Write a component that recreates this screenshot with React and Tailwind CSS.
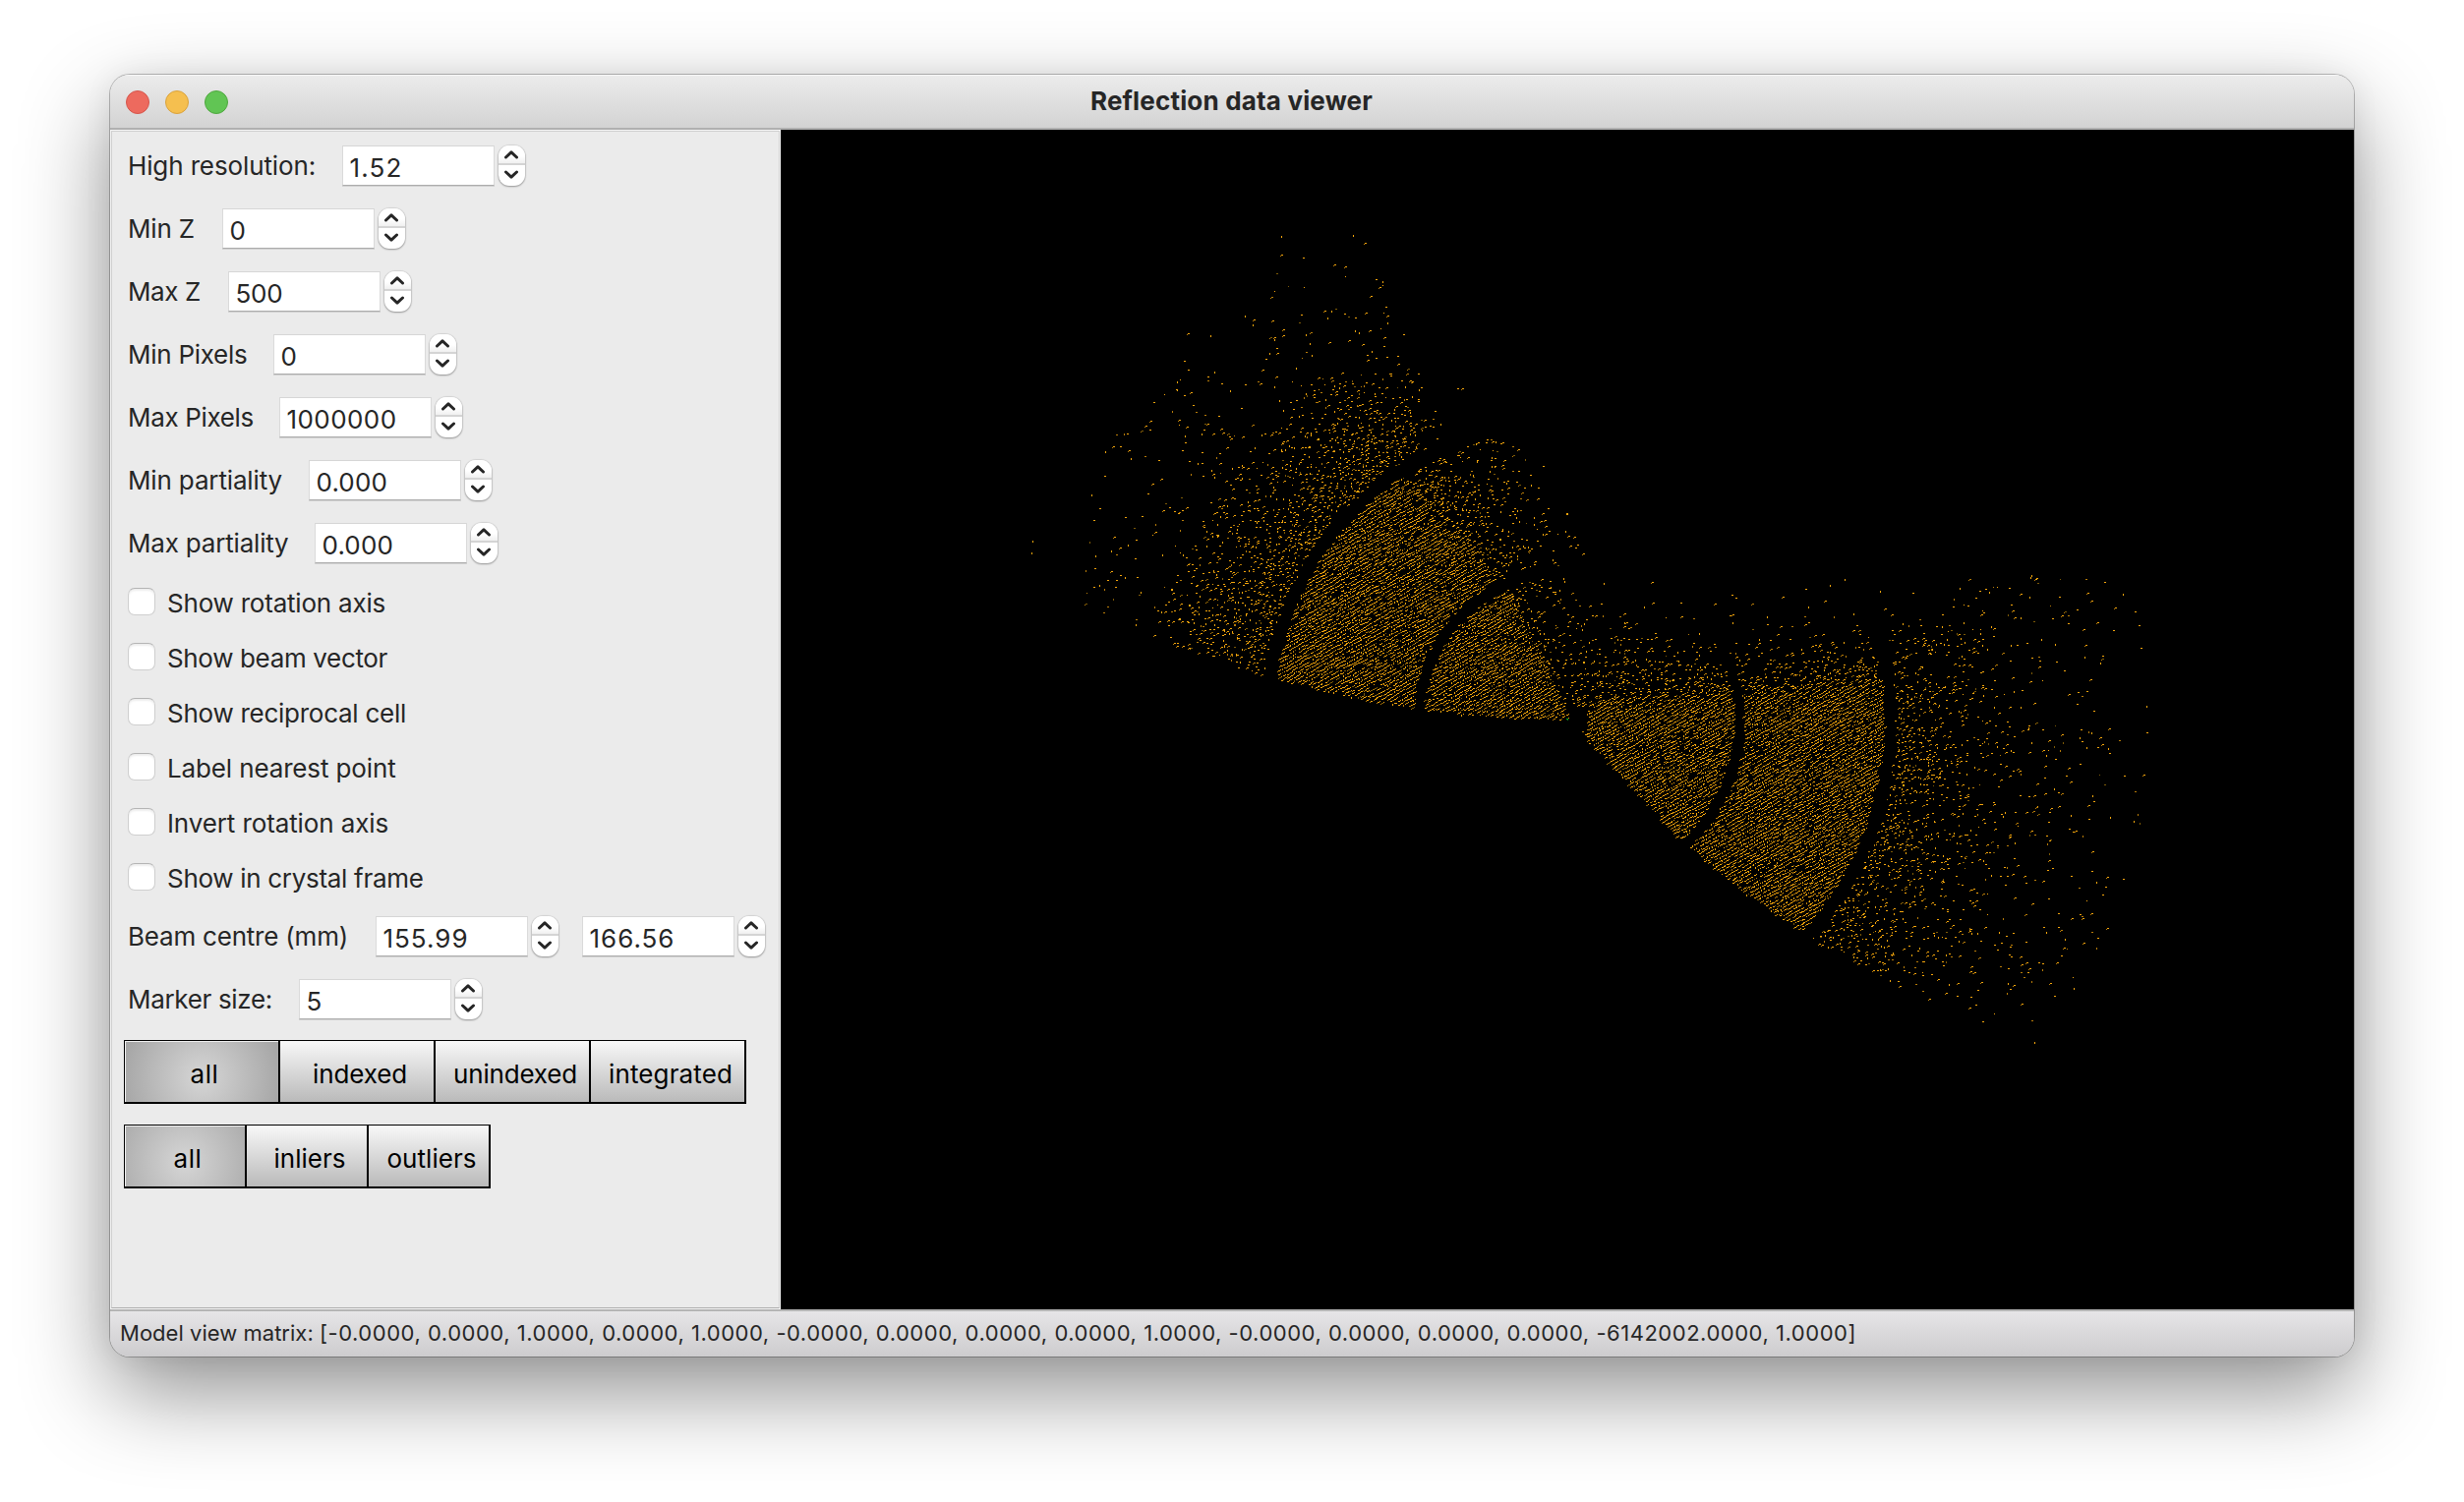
import { useLayoutEffect, useMemo, useRef } from "react";

// Text whose tracking is adjusted so that its advance width equals `w`.
function Fit({ w, className = "", children }) {
  const ref = useRef(null);
  useLayoutEffect(() => {
    const el = ref.current;
    el.style.letterSpacing = "0px";
    const natural = el.getBoundingClientRect().width;
    el.style.letterSpacing = (w - natural) / el.textContent.length + "px";
  }, [w, children]);
  return (
    <span ref={ref} className={"inline-block shrink-0 whitespace-pre " + className}>
      {children}
    </span>
  );
}

function Stepper() {
  return (
    <div className="ml-1 flex h-[41px] w-[27px] shrink-0 flex-col overflow-hidden rounded-[11px] bg-white shadow-[0_0_1px_1px_rgba(0,0,0,0.09),0_1px_2px_rgba(0,0,0,0.3)]">
      <div className="flex h-5 items-center justify-center border-b-2 border-[#d4d4d4] bg-linear-to-b from-white from-60% to-[#f0f0f0]">
        <svg width="16" height="10" viewBox="0 0 16 10" fill="none" stroke="#262626" strokeWidth="3" strokeLinecap="round" strokeLinejoin="round">
          <path d="M2.5 8 L8 2.8 L13.5 8" />
        </svg>
      </div>
      <div className="flex h-[21px] items-center justify-center">
        <svg width="16" height="10" viewBox="0 0 16 10" fill="none" stroke="#262626" strokeWidth="3" strokeLinecap="round" strokeLinejoin="round">
          <path d="M2.5 2 L8 7.2 L13.5 2" />
        </svg>
      </div>
    </div>
  );
}

function Spin({ value, w }) {
  return (
    <div className="flex items-center">
      <div className="flex h-[41px] w-[155px] items-center border border-b-[#acacac] border-x-[#dadada] border-t-[#d6d6d6] bg-white pl-[7px] pt-[5px] leading-none shadow-[0_1px_0_#d2d2d2]">
        <Fit w={w}>{value}</Fit>
      </div>
      <Stepper />
    </div>
  );
}

function Check({ label, w }) {
  return (
    <div className="flex h-14 items-center pl-4">
      <div className="h-7 w-7 rounded-[7px] border border-[#cfcfcf] border-t-[#b4b4b4] bg-white shadow-[inset_0_2px_2px_rgba(0,0,0,0.07)]" />
      <Fit w={w} className="ml-3 pt-[3px] leading-none">{label}</Fit>
    </div>
  );
}

const fields = [
  ["High resolution:", 191, "w-[217.5px]", "1.52", 54],
  ["Min Z", 68, "w-[95.5px]", "0", 17],
  ["Max Z", 74, "w-[101.5px]", "500", 48],
  ["Min Pixels", 121.5, "w-[147.5px]", "0", 17],
  ["Max Pixels", 128, "w-[153.5px]", "1000000", 112],
  ["Min partiality", 157, "w-[183.5px]", "0.000", 72.5],
  ["Max partiality", 163.5, "w-[189.5px]", "0.000", 72.5],
];

const checks = [
  ["Show rotation axis", 222],
  ["Show beam vector", 224],
  ["Show reciprocal cell", 243],
  ["Label nearest point", 232.5],
  ["Invert rotation axis", 225],
  ["Show in crystal frame", 260.5],
];

const groups = [
  { box: "w-[633px]", cell: "w-[158px]", items: [["all", 29], ["indexed", 96], ["unindexed", 126], ["integrated", 126]] },
  { box: "w-[373px]", cell: "w-[124px]", items: [["all", 29], ["inliers", 73], ["outliers", 91]] },
];

function Segments({ box, cell, items }) {
  return (
    <div className={box + " flex h-[65px] border-b-2 border-l border-t border-black text-black"}>
      {items.map(([t, w], i) => (
        <div
          key={t}
          className={
            cell +
            " flex shrink-0 items-center justify-center border-r-2 border-black pl-1.5 pt-[5px] leading-none " +
            (i === 0
              ? "bg-[radial-gradient(circle_at_50%_60%,#d6d6d6_0,#a6a6a6_82px)] shadow-[inset_1px_1px_0_#f0f0f0]"
              : "bg-linear-to-b from-[#f8f8f8] to-[#bababa]")
          }
        >
          <Fit w={w}>{t}</Fit>
        </div>
      ))}
    </div>
  );
}

// Seeded generator, so that the cloud is the same on each load.
function rng(seed) {
  let s = seed;
  return () => {
    s = (s + 0x6d2b79f5) | 0;
    let t = Math.imul(s ^ (s >>> 15), 1 | s);
    t = (t + Math.imul(t ^ (t >>> 7), 61 | t)) ^ t;
    return ((t ^ (t >>> 14)) >>> 0) / 4294967296;
  };
}

const OX = 800;
const OY = 600;
const DEG = 180 / Math.PI;
const clamp = (v) => Math.max(0, Math.min(1, v));
const mix = (a, b, t) => a + (b - a) * clamp(t);

// Radial fall-off shared by both lobes, with detector gaps at g1 and g2.
function radial(r, g1, g2, mid, end) {
  if (Math.abs(r - g1) < 5.5 || Math.abs(r - g2) < 6.5) return 0;
  if (r < g2) return 1;
  if (r < mid) return mix(0.78, 0.16, (r - g2) / (mid - g2));
  if (r < end) return mix(0.085, 0.025, (r - mid) / (end - mid));
  return 0;
}

function leftLobe(dx, dy) {
  const r = Math.hypot(dx, dy);
  const a = Math.atan2(-dy, -dx) * DEG;
  const end = a > 40 ? 556 : a > 20 ? 545 : 525;
  if (a < r * 0.0265 || r > end) return 0;
  const amax = Math.max(67.5, 121 - r * 0.135);
  if (a > amax) return 0;
  const p = radial(r, 152, 306, 424, 560);
  if (r > 424) return a > 60 ? p * 0.6 : p;
  if (r > 306) {
    return a < 60 ? p : Math.min(p, mix(p * 0.8, 0.03, (a - 60) / 8));
  }
  const top = 51 + (306 - r) * 0.05;
  if (a < top) return p;
  if (a < top + 13) return Math.min(p, mix(1, 0.42, (a - top) / 13));
  return Math.min(p, mix(0.36, 0.03, (a - top - 13) / (amax - top - 15)));
}

function rightLobe(dx, dy) {
  const r = Math.hypot(dx, dy);
  const b = Math.atan2(dy, dx) * DEG;
  if (dx < 3 || r > 592 || (r < 20 && dy > -15)) return 0;
  if (b > 47 - Math.max(0, r - 170) * 0.031) return 0;
  const outer = dy > 0 ? 465 : 445;
  const p = radial(r, 174, 328, outer, 592) * (r > 328 && r < outer ? mix(1, 0.65, (r - 328) / 60) : 1);
  const edge = -30 - dx * 0.07;
  if (dy > edge + 22) return p;
  if (r > outer) return dy < -145 ? 0 : p * 0.7;
  if (dy > edge - 10) return p * mix(0.42, 1, (dy - edge + 10) / 32);
  if (dy < -145) return 0;
  const d = edge - 10 - dy;
  const fade = d < 40 ? mix(0.34, 0.06, d / 40) : mix(0.045, 0.008, (d - 40) / 60);
  if (dx < 110) {
    const row = ((dy % 12) + 12) % 12 < 3.8 ? 2.1 : 0.4;
    return Math.min(p, mix(0.5, 0.015, (dx * 0.3 - dy - 40) / 85) * row);
  }
  return Math.min(p, fade);
}

function buildCloud() {
  const rand = rng(20211);
  const bright = [];
  const mid = [];
  const dim = [];
  const slope = 0.56;
  const put = (list, x, y, w, h) => list.push("M" + x + " " + y + "h" + w + "v" + h + "h-" + w + "z");
  for (let c = 0; c < 1700; c += 3.8) {
    for (let x = 240 + rand() * 3; x < 1400; x += 3.3) {
      const y = c - slope * (x - 240);
      if (y < 80 || y > 940) continue;
      const dx = x - OX;
      const dy = y - OY;
      const p = Math.max(leftLobe(dx, dy), rightLobe(dx, dy));
      if (rand() > p * 0.93) continue;
      const loose = p < 0.8 ? 3.4 : 1.2;
      const px = Math.round(x + (rand() - 0.5) * loose);
      const py = Math.round(y + (rand() - 0.5) * loose);
      const k = rand();
      const list = k < 0.78 ? bright : k < 0.93 ? mid : dim;
      const s = rand();
      if (s < 0.42) put(list, px, py, 2, 1);
      else if (s < 0.6) put(list, px, py, 1, 2);
      else if (s < 0.66) put(list, px, py, 1, 1);
      else {
        put(list, px, py, 2, 1);
        put(mid, px - 1, py + 1, 1, 1);
      }
      if (p > 0.8 && rand() < 0.85) put(rand() < 0.7 ? bright : dim, px + 2, py - 1, 1, 1);
    }
  }
  // Isolated reflections far from the main sweep.
  [[255, 430], [256, 418], [509, 108], [582, 107], [1272, 453], [1389, 586], [1275, 928], [1271, 455]].forEach(
    ([x, y]) => put(bright, x, y, 1, 2)
  );
  return { bright: bright.join(""), mid: mid.join(""), dim: dim.join("") };
}

function Cloud() {
  const d = useMemo(buildCloud, []);
  return (
    <svg width="1600" height="1200" viewBox="0 0 1600 1200" shapeRendering="crispEdges" className="block">
      <path d={d.dim} fill="#7d5a06" />
      <path d={d.mid} fill="#b87c08" />
      <path d={d.bright} fill="#f5a60c" />
      <rect x="799" y="599" width="2" height="1" fill="#00b41e" />
      <rect x="800" y="600" width="1" height="1" fill="#00801a" />
    </svg>
  );
}

export default function App() {
  return (
    <div className="flex h-[1528px] w-[2506px] items-start overflow-hidden bg-white pl-[112px] pt-[76px] font-['Inter',sans-serif] text-[26px] text-[#262626]">
      <div className="flex h-[1304px] w-[2282px] flex-col overflow-hidden rounded-[20px] bg-[#ebebeb] shadow-[0_0_0_1px_rgba(0,0,0,0.25),0_36px_90px_rgba(0,0,0,0.44),0_0_30px_rgba(0,0,0,0.06)]">
        <header className="grid h-14 shrink-0 grid-cols-[1fr_auto_1fr] items-center border-b-2 border-[#b0b0b0] bg-linear-to-b from-[#ececec] to-[#d3d3d3] shadow-[inset_0_1px_0_#f8f8f8]">
          <div className="flex gap-4 pl-4 pt-0.5">
            <div className="h-6 w-6 rounded-full border border-[#d5554b] bg-[#ed6a5e]" />
            <div className="h-6 w-6 rounded-full border border-[#d9a23c] bg-[#f5bf4f]" />
            <div className="h-6 w-6 rounded-full border border-[#4fa73f] bg-[#61c554]" />
          </div>
          <Fit w={288} className="pr-px font-bold leading-none">Reflection data viewer</Fit>
          <div />
        </header>
        <main className="flex h-[1200px] shrink-0">
          <aside className="h-[1200px] w-[682px] shrink-0 border-r border-r-[#fafafa] bg-[#f4f4f4] pl-px pt-px">
            <div className="h-[1198px] border-b border-l border-r border-t border-b-[#adadad] border-l-[#d0d0d0] border-r-[#d0d0d0] border-t-[#d0d0d0] bg-[#ebebeb] pt-0.5">
              {fields.map(([label, w, col, value, vw]) => (
                <div key={label} className="flex h-16 items-center pl-4">
                  <div className={col + " shrink-0 pt-0.5 leading-none"}>
                    <Fit w={w}>{label}</Fit>
                  </div>
                  <Spin value={value} w={vw} />
                </div>
              ))}
              {checks.map(([label, w]) => (
                <Check key={label} label={label} w={w} />
              ))}
              <div className="flex h-16 items-center pl-4">
                <div className="w-[251.5px] shrink-0 pt-0.5 leading-none">
                  <Fit w={224}>Beam centre (mm)</Fit>
                </div>
                <Spin value="155.99" w={87} />
                <div className="w-6 shrink-0" />
                <Spin value="166.56" w={87} />
              </div>
              <div className="flex h-16 items-center pl-4">
                <div className="w-[173.5px] shrink-0 pt-0.5 leading-none">
                  <Fit w={147}>Marker size:</Fit>
                </div>
                <Spin value="5" w={17} />
              </div>
              <div className="flex flex-col gap-[21px] pl-3 pt-2.5">
                {groups.map((g) => (
                  <Segments key={g.cell} {...g} />
                ))}
              </div>
            </div>
          </aside>
          <section className="h-[1200px] w-[1600px] bg-black">
            <Cloud />
          </section>
        </main>
        <footer className="flex h-12 shrink-0 items-center border-t-2 border-[#b5b5b5] bg-linear-to-b from-[#e6e5e7] to-[#cdccce] pb-0.5 pl-2.5 text-[22px] leading-none">
          <Fit w={203}>Model view matrix: </Fit>
          <Fit w={1563}>
            [-0.0000, 0.0000, 1.0000, 0.0000, 1.0000, -0.0000, 0.0000, 0.0000, 0.0000, 1.0000, -0.0000, 0.0000, 0.0000, 0.0000, -6142002.0000, 1.0000]
          </Fit>
        </footer>
      </div>
    </div>
  );
}
